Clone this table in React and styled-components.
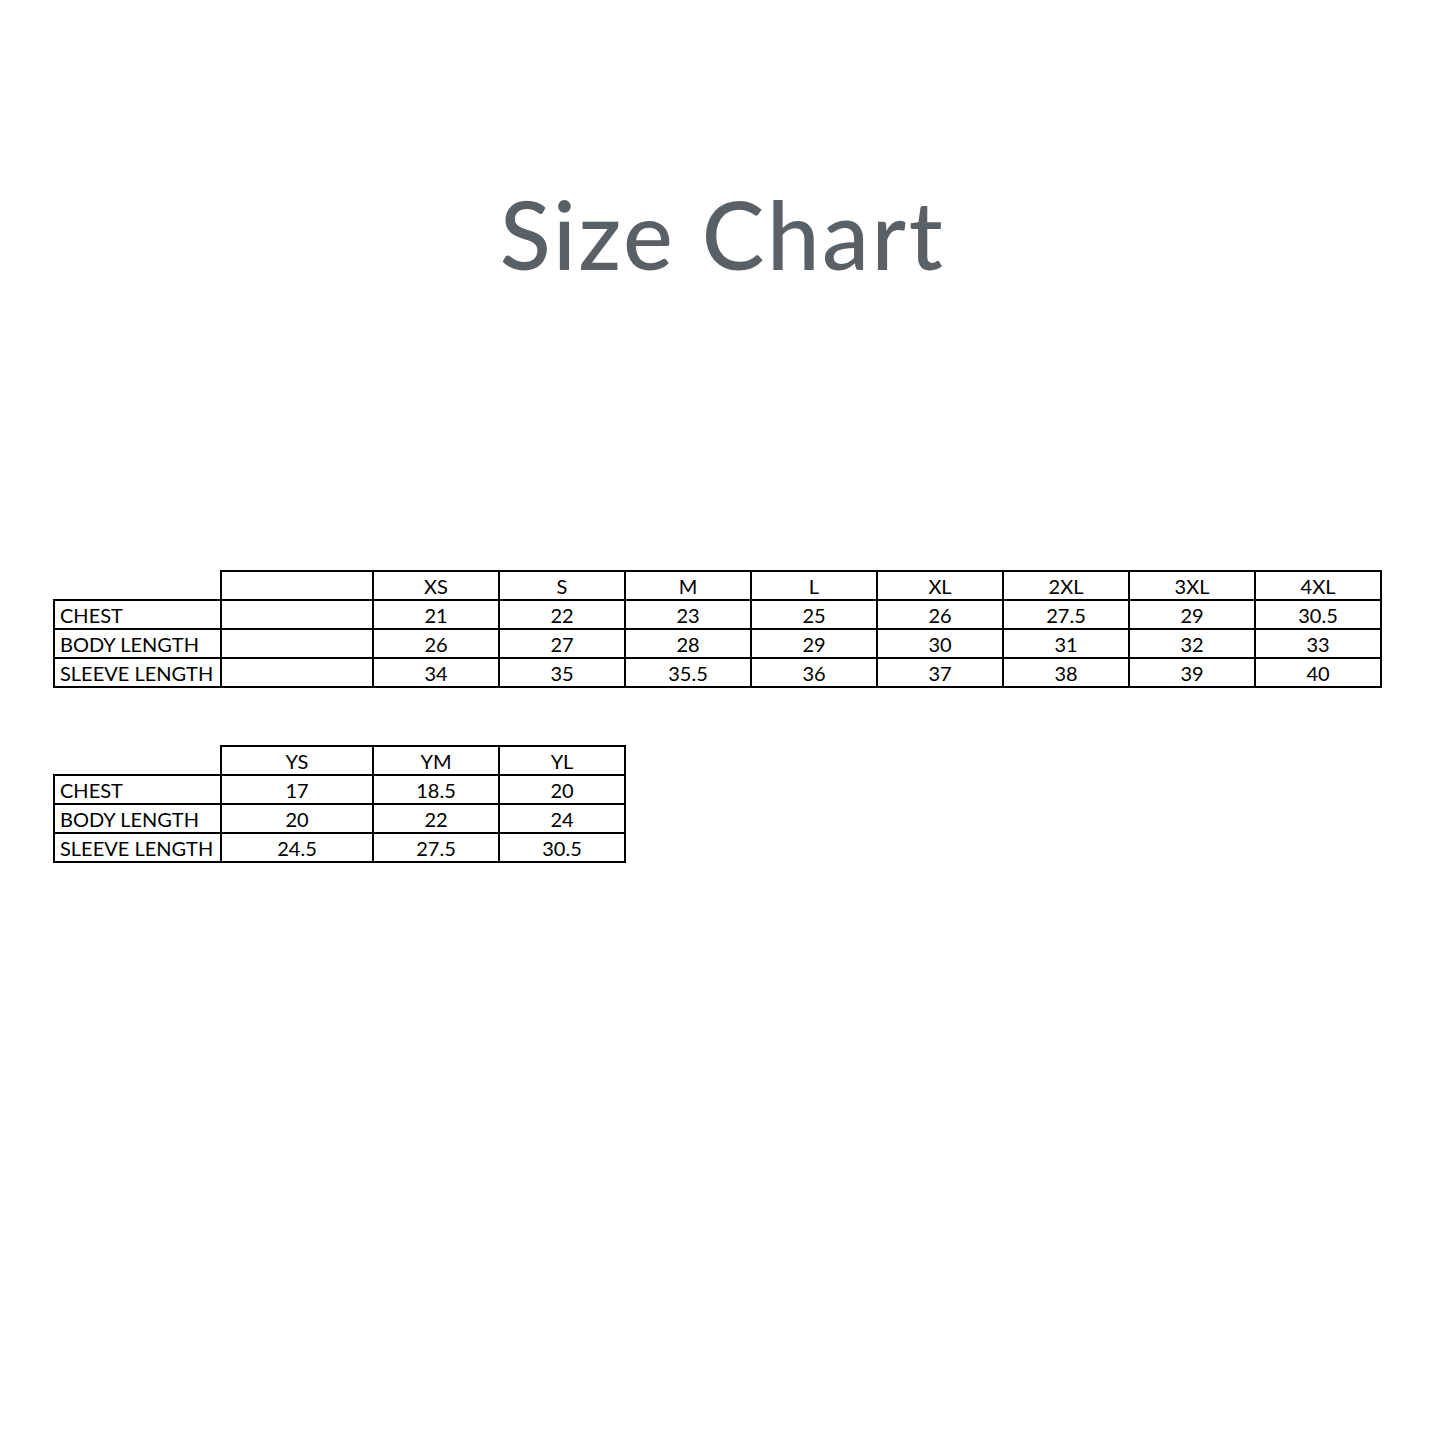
import React from "react"
import styled, { createGlobalStyle } from "styled-components"

const LABEL_WIDTH = 167
const BLANK_WIDTH = 152
const SIZE_WIDTH = 126

const adultSizes = ["XS", "S", "M", "L", "XL", "2XL", "3XL", "4XL"]
const adultRows = [
  { label: "CHEST", values: ["21", "22", "23", "25", "26", "27.5", "29", "30.5"] },
  { label: "BODY LENGTH", values: ["26", "27", "28", "29", "30", "31", "32", "33"] },
  { label: "SLEEVE LENGTH", values: ["34", "35", "35.5", "36", "37", "38", "39", "40"] },
]

const youthSizes = ["YS", "YM", "YL"]
const youthRows = [
  { label: "CHEST", values: ["17", "18.5", "20"] },
  { label: "BODY LENGTH", values: ["20", "22", "24"] },
  { label: "SLEEVE LENGTH", values: ["24.5", "27.5", "30.5"] },
]

const GlobalStyle = createGlobalStyle`
  html, body {
    margin: 0;
    background: #fff;
  }
`

export default function App() {
  return (
    <Page>
      <GlobalStyle />
      <Title>Size Chart</Title>
      <Tables>
        <SizeTable sizes={adultSizes} rows={adultRows} withBlank />
        <SizeTable sizes={youthSizes} rows={youthRows} />
      </Tables>
    </Page>
  )
}

function SizeTable({ sizes, rows, withBlank }) {
  return (
    <Table>
      <colgroup>
        <col style={{ width: LABEL_WIDTH }} />
        <col style={{ width: BLANK_WIDTH }} />
        {sizes.slice(withBlank ? 0 : 1).map(s => (
          <col key={s} style={{ width: SIZE_WIDTH }} />
        ))}
      </colgroup>
      <thead>
        <tr>
          <Corner />
          {withBlank && <Cell />}
          {sizes.map(s => (
            <Cell key={s}>{s}</Cell>
          ))}
        </tr>
      </thead>
      <tbody>
        {rows.map(({ label, values }) => (
          <tr key={label}>
            <Label>{label}</Label>
            {withBlank && <Cell />}
            {values.map((v, i) => (
              <Cell key={i}>{v}</Cell>
            ))}
          </tr>
        ))}
      </tbody>
    </Table>
  )
}

const Page = styled.div`
  width: 1445px;
  height: 1445px;
  font-family: Lato, "Open Sans", sans-serif;
  color: #111;
`

const Title = styled.h1`
  margin: 0;
  padding-top: 180px;
  text-align: center;
  font-family: Lato, sans-serif;
  font-weight: 500;
  font-size: 94px;
  line-height: 108px;
  letter-spacing: 2.6px;
  color: #596166;
`

const Tables = styled.div`
  display: flex;
  flex-direction: column;
  align-items: flex-start;
  gap: 57px;
  padding: 282px 0 0 53px;
`

const Table = styled.table`
  border-collapse: collapse;
  table-layout: fixed;
  font-size: 20px;
  color: #000;
`

const Cell = styled.td`
  height: 25px;
  padding: 2px 0 0;
  border: 2px solid #000;
  text-align: center;
  vertical-align: middle;
  line-height: 25px;
`

const Corner = styled.td`
  padding: 0;
  border: none;
  border-bottom: 2px solid #000;
`

const Label = styled(Cell)`
  text-align: left;
  padding-left: 5px;
`
